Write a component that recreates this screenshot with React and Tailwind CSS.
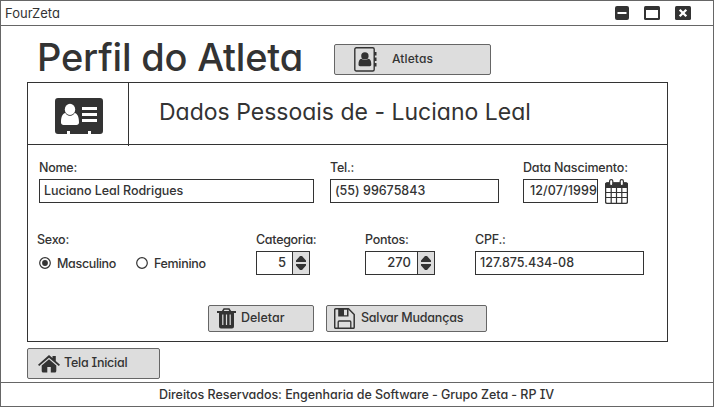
import React from "react";

const INK = "#333333";

function Button({ className, children }) {
  return (
    <button className={`flex items-center rounded-[2px] border border-[#666] bg-[#dddddd] text-left ${className}`}>
      {children}
    </button>
  );
}

function Label({ className = "tracking-[-0.25px]", children }) {
  return <div className={`h-5 text-[12.5px] leading-5 whitespace-nowrap ${className}`}>{children}</div>;
}

function Field({ className = "", children }) {
  return (
    <div className={`mt-px flex h-6 items-center border border-[#333] bg-white text-[12.5px] leading-5 whitespace-nowrap ${className}`}>
      <span>{children}</span>
    </div>
  );
}

function Stepper({ className, value }) {
  return (
    <div className={`mt-px flex h-6 border border-[#333] ${className}`}>
      <div className="flex-1 pr-[6px] text-right text-[13px] leading-[21px]">{value}</div>
      <div className="flex w-[17px] items-center justify-center border-l border-[#333] bg-[#dddddd]">
        <svg width="12" height="16" viewBox="0 0 12 16" fill={INK}>
          <path d="M5 1h2l4 4.500v1.500H1V5.500zM1 9h10v1.500L7 15H5l-4-4.500z" />
        </svg>
      </div>
    </div>
  );
}

function Radio({ checked }) {
  return (
    <svg width="12" height="12" viewBox="0 0 12 12">
      <circle cx="6" cy="6" r="5.300" fill="white" stroke={INK} strokeWidth="1.200" />
      {checked && <circle cx="6" cy="6" r="2.900" fill={INK} />}
    </svg>
  );
}

function IdCardIcon() {
  return (
    <svg width="48" height="37" viewBox="0 0 48 37">
      <path fill={INK} d="M3 0h42a3 3 0 0 1 3 3v30a3 3 0 0 1-3 3h-9v-3h-3v3H15v-3h-3v3H3a3 3 0 0 1-3-3V3a3 3 0 0 1 3-3z" />
      <path fill="white" d="M6 24.500c0-5 1.200-9 4.500-9.500 2.800 3.500 6.200 3.500 9 0 3.300.5 4.500 4.500 4.500 9.500 0 1.500-1 2.500-2.500 2.500h-13C7 27 6 26 6 24.500z" />
      <ellipse cx="15" cy="11.500" rx="5.200" ry="5.700" fill="white" />
      <path fill="none" stroke={INK} strokeWidth=".6" d="M10.500 15c2.800 3.200 6.200 3.200 9 0" />
      <path fill="white" d="M27 9h15v3H27zM27 15h15v3H27zM27 21h15v3H27z" />
    </svg>
  );
}

function ContactsIcon() {
  return (
    <svg width="24" height="25" viewBox="0 0 24 25">
      <rect x=".8" y=".8" width="19.400" height="23.200" rx="1.500" fill="none" stroke={INK} strokeWidth="1.400" />
      <path fill={INK} d="M20 5h2.500v3.500H20zM20 10.500h2.500V14H20zM20 16h2.500v3.500H20zM4.500 17.600c0-3.400.8-5.500 3-5.900 1.700 1.700 5 1.700 6.800 0 2.200.4 3 2.500 3 5.900 0 1-.6 1.600-1.500 1.600H6c-.9 0-1.500-.6-1.500-1.600z" />
      <circle cx="10.900" cy="8.900" r="3.700" fill={INK} />
    </svg>
  );
}

function CalendarIcon() {
  return (
    <svg width="23" height="25" viewBox="0 0 23 25">
      <rect x=".6" y="4" width="21.800" height="20.300" rx="1.500" fill="white" stroke={INK} strokeWidth="1.300" />
      <path fill={INK} d="M0 5a1.500 1.500 0 0 1 1.500-1.500h20A1.500 1.500 0 0 1 23 5v4H0z" />
      <path fill="none" stroke={INK} strokeWidth="1.200" d="M1 13.500h21M1 18.500h21M6.200 9v15M11.500 9v15M16.800 9v15" />
      <rect x="4.600" y=".6" width="3.200" height="6" rx="1.500" fill="white" stroke={INK} strokeWidth="1.200" />
      <rect x="15.200" y=".6" width="3.200" height="6" rx="1.500" fill="white" stroke={INK} strokeWidth="1.200" />
    </svg>
  );
}

function TrashIcon() {
  return (
    <svg width="19" height="21" viewBox="0 0 19 21">
      <path fill="none" stroke={INK} strokeWidth="1.500" d="M5.500 3.500 7 1h5l1.500 2.500" />
      <path fill={INK} d="M0 3h19v2h-2v13.500a2 2 0 0 1-2 2H4a2 2 0 0 1-2-2V5H0z" />
      <path fill="#dddddd" d="M5.200 6.500h1.200V17H5.200zM8.900 6.500h1.200V17H8.900zM12.600 6.500h1.200V17h-1.200z" />
    </svg>
  );
}

function SaveIcon() {
  return (
    <svg width="21" height="21" viewBox="0 0 21 21">
      <path fill="none" stroke={INK} strokeWidth="1.500" strokeLinejoin="round" d="M1.700.8h12.800l5.700 5.700v12.800a1 1 0 0 1-1 1H1.700a1 1 0 0 1-1-1V1.800a1 1 0 0 1 1-1z" />
      <path fill={INK} fillRule="evenodd" d="M4.200.5h10.300v8H4.200zM10 1.500v5.700h3V1.500z" />
      <path fill="none" stroke={INK} strokeWidth="1.300" d="M4.200 20v-6a1 1 0 0 1 1-1h10.600a1 1 0 0 1 1 1v6" />
    </svg>
  );
}

function HomeIcon() {
  return (
    <svg width="22" height="18" viewBox="0 0 22 18">
      <path fill={INK} d="M11 4.200 18.300 10.500V16a1.500 1.500 0 0 1-1.500 1.500h-4V12H9.300v5.500H5.200A1.500 1.500 0 0 1 3.700 16v-5.500z" />
      <path fill={INK} d="M11 0 14.500 3V1h3.300v5L22 9.700 20.800 11 11 2.700 1.200 11 0 9.700z" />
    </svg>
  );
}

function WindowControls() {
  return (
    <div className="mr-[22px] flex items-center">
      <svg width="14" height="14" viewBox="0 0 14 14">
        <rect width="14" height="14" rx="2" fill={INK} />
        <path fill="white" d="M2.500 6h9v2h-9z" />
      </svg>
      <svg className="ml-[15px]" width="16" height="14" viewBox="0 0 16 14">
        <rect width="16" height="14" rx="1.500" fill={INK} />
        <path fill="white" d="M2 4h12v8H2z" />
      </svg>
      <svg className="ml-[15px]" width="16" height="14" viewBox="0 0 16 14">
        <rect width="16" height="14" rx="1.500" fill={INK} />
        <path stroke="white" strokeWidth="2.300" d="m4.700 3.700 6.600 6.600m0-6.600-6.600 6.600" />
      </svg>
    </div>
  );
}

export default function App() {
  return (
    <div className="flex h-[407px] w-[714px] flex-col overflow-hidden border border-[#666] bg-white font-[Inter,'Open_Sans',sans-serif] font-medium text-[#333] [font-feature-settings:'cv11','cv08','ss03','calt'_0]">
      <header className="flex h-[25px] shrink-0 items-center justify-between border-b border-[#666]">
        <span className="ml-1 text-[13px] leading-5 font-normal">FourZeta</span>
        <WindowControls />
      </header>

      <main className="flex-1 pl-[26px]">
        <div className="flex h-14">
          <h1 className="mt-[7px] w-[307px] pl-[10px] text-[38px] leading-[48px] font-medium tracking-[-0.2px] whitespace-nowrap">Perfil do Atleta</h1>
          <Button className="mt-[18px] h-[31px] w-[157px] pl-[19px]">
            <ContactsIcon />
            <span className="ml-[14px] text-[12px] leading-5 tracking-[0.1px] -translate-y-px">Atletas</span>
          </Button>
        </div>

        <section className="h-[260px] w-[641px] border border-[#333]">
          <div className="flex h-[62px] border-b border-[#333]">
            <div className="h-[63px] w-[101px] shrink-0 border-r border-[#333] pt-[15px] pl-[27px]">
              <IdCardIcon />
            </div>
            <h2 className="mt-[14px] ml-[30px] text-[23px] leading-[30px] font-normal whitespace-nowrap">Dados Pessoais de - Luciano Leal</h2>
          </div>

          <div className="flex pt-[13px] pl-[11px]">
            <div className="w-[291px]">
              <Label>Nome:</Label>
              <Field className="w-[275px] pl-1 tracking-[-0.05px]">Luciano Leal Rodrigues</Field>
            </div>
            <div className="w-[193px]">
              <Label>Tel.:</Label>
              <Field className="w-[169px] pl-1">(55) 99675843</Field>
            </div>
            <div>
              <Label className="tracking-[-0.18px]">Data Nascimento:</Label>
              <div className="flex">
                <Field className="w-[75px] pl-[6px] tracking-[0.1px]">12/07/1999</Field>
                <div className="mt-px ml-[7px]">
                  <CalendarIcon />
                </div>
              </div>
            </div>
          </div>

          <div className="mt-[26px] flex h-[46px] pl-[9px]">
            <div className="w-[219px]">
              <Label>Sexo:</Label>
              <div className="mt-[3px] flex items-center pl-[2px] text-[12.5px] leading-5 tracking-[-0.33px]">
                <Radio checked />
                <span className="ml-[6px] w-[79px] translate-y-px">Masculino</span>
                <Radio />
                <span className="ml-[6px] translate-y-px">Feminino</span>
              </div>
            </div>
            <div className="w-[109px]">
              <Label className="tracking-[-0.3px]">Categoria:</Label>
              <Stepper className="w-[54px]" value="5" />
            </div>
            <div className="w-[110px]">
              <Label>Pontos:</Label>
              <Stepper className="w-[70px]" value="270" />
            </div>
            <div>
              <Label>CPF.:</Label>
              <Field className="w-[169px] pl-1">127.875.434-08</Field>
            </div>
          </div>

          <div className="mt-[29px] flex gap-3 pl-[180px]">
            <Button className="h-[27px] w-[106px] pl-[8px]">
              <TrashIcon />
              <span className="ml-[5px] text-[12.5px] leading-5 -translate-y-px">Deletar</span>
            </Button>
            <Button className="h-[27px] w-[161px] pl-[7px]">
              <SaveIcon />
              <span className="ml-[6px] text-[12.5px] leading-5 tracking-[-0.22px] -translate-y-px">Salvar Mudanças</span>
            </Button>
          </div>
        </section>

        <Button className="mt-[6px] h-[31px] w-[133px] pl-[10px]">
          <HomeIcon />
          <span className="ml-[4px] text-[12.5px] leading-5 tracking-[-0.25px] -translate-y-px">Tela Inicial</span>
        </Button>
      </main>

      <footer className="flex h-[24px] shrink-0 items-center border-t border-[#666] pl-[158px] text-[12.5px] leading-5 tracking-[-0.05px] whitespace-nowrap">
        <span>Direitos Reservados: Engenharia de Software - Grupo Zeta - RP IV</span>
      </footer>
    </div>
  );
}
